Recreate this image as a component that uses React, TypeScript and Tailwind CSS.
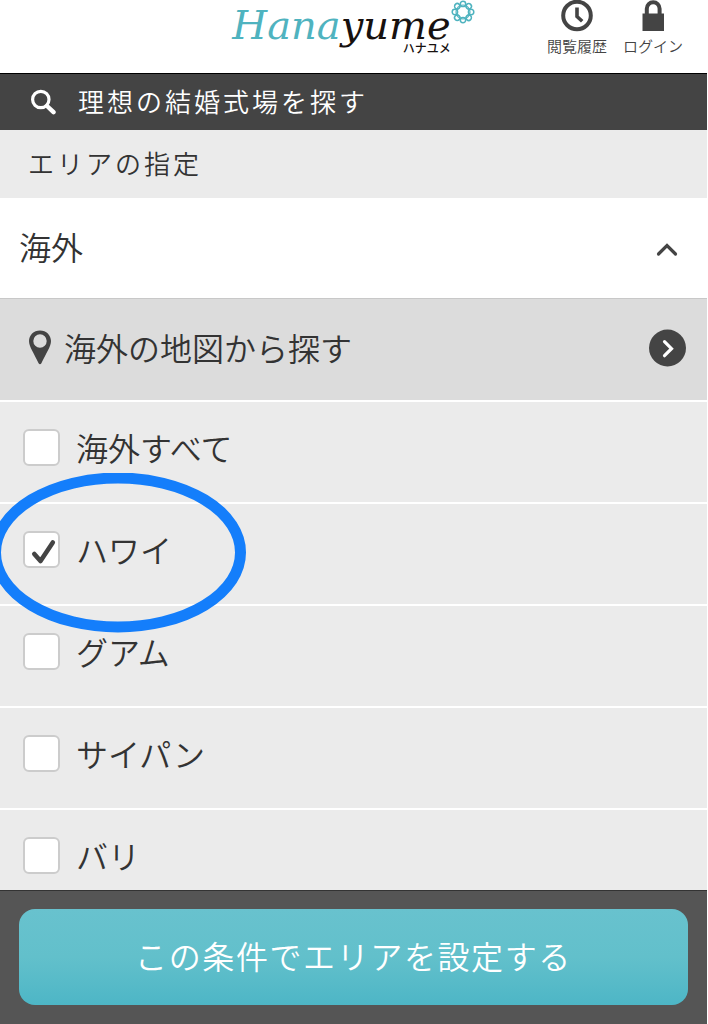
import { useState } from 'react';

interface Area {
  id: string;
  label: string;
}

const AREAS: Area[] = [
  { id: 'all', label: '海外すべて' },
  { id: 'hawaii', label: 'ハワイ' },
  { id: 'guam', label: 'グアム' },
  { id: 'saipan', label: 'サイパン' },
  { id: 'bali', label: 'バリ' },
];

const PETALS = [0, 45, 90, 135, 180, 225, 270, 315];

function Logo() {
  return (
    <a href="#top" className="relative block pr-6" aria-label="Hanayume ハナユメ">
      <span className="block font-['DejaVu_Serif',serif] text-[40px] leading-[50px] whitespace-nowrap text-[#17110f] italic">
        <span className="text-[#4fb3bf]">Hana</span>yume
      </span>
      <span className="absolute right-6 bottom-[-6px] text-xs leading-4 font-medium text-[#17110f]">
        ハナユメ
      </span>
      <svg
        viewBox="0 0 24 24"
        className="absolute top-0 right-0 size-6"
        fill="none"
        stroke="#4fb3bf"
        aria-hidden="true"
      >
        <circle cx="12" cy="12" r="7" strokeWidth="1.2" />
        {PETALS.map((angle) => (
          <circle
            key={angle}
            cx="12"
            cy="3.9"
            r="2.7"
            strokeWidth="1.5"
            transform={`rotate(${angle} 12 12)`}
          />
        ))}
      </svg>
    </a>
  );
}

function Header() {
  return (
    <header className="grid h-[74px] shrink-0 grid-cols-[1fr_auto_1fr] items-start border-b border-black bg-white">
      <div />
      <Logo />
      <nav className="flex justify-end gap-4 pr-6 text-[15px] leading-5 text-[#444]">
        <a href="#history" className="flex flex-col items-center gap-1">
          <svg viewBox="0 0 32 32" className="size-8" fill="none" stroke="#444" aria-hidden="true">
            <circle cx="16" cy="15.5" r="13.8" strokeWidth="4" />
            <path d="M16 7.500v9l5.200 4.800" strokeWidth="3.6" />
          </svg>
          閲覧履歴
        </a>
        <a href="#login" className="flex flex-col items-center gap-1">
          <svg viewBox="0 0 32 32" className="size-8" fill="#444" aria-hidden="true">
            <path d="M5.500 13.500h21.500v17.500H5.500z" />
            <path
              d="M9.800 15V8.700a6.400 6.400 0 0 1 12.800 0V15"
              fill="none"
              stroke="#444"
              strokeWidth="4"
            />
          </svg>
          ログイン
        </a>
      </nav>
    </header>
  );
}

interface AreaRowProps {
  area: Area;
  checked: boolean;
  onToggle: () => void;
}

function AreaRow({ area, checked, onToggle }: AreaRowProps) {
  return (
    <li className="relative border-b-2 border-white bg-[#ebebeb]">
      <label className="flex h-[100px] items-center gap-4 pb-2.5 pl-[23px]">
        <span className="grid size-[37px]">
          <input
            type="checkbox"
            checked={checked}
            onChange={onToggle}
            className="peer col-start-1 row-start-1 size-[37px] appearance-none rounded-md border-2 border-[#ccc] bg-white"
          />
          <svg
            viewBox="0 0 37 37"
            className="pointer-events-none invisible z-10 col-start-1 row-start-1 size-[37px] peer-checked:visible"
            fill="none"
            stroke="#444"
            strokeWidth="4.6"
            strokeLinecap="round"
            strokeLinejoin="round"
            aria-hidden="true"
          >
            <path d="M11.300 23l6.200 7L29.800 11.500" />
          </svg>
        </span>
        <span>{area.label}</span>
      </label>
      {area.id === 'hawaii' && (
        <svg
          viewBox="0 0 256 160"
          className="pointer-events-none absolute top-[-31px] left-[-10px] z-20 h-[160px] w-[256px]"
          fill="none"
          aria-hidden="true"
        >
          <ellipse cx="128" cy="79.500" rx="122.500" ry="74.500" stroke="#147efb" strokeWidth="11" />
        </svg>
      )}
    </li>
  );
}

export default function App() {
  const [open, setOpen] = useState(true);
  const [selected, setSelected] = useState<string[]>(['hawaii']);

  const toggle = (id: string) =>
    setSelected((ids) => (ids.includes(id) ? ids.filter((x) => x !== id) : [...ids, id]));

  return (
    <div
      lang="ja"
      className="flex h-screen flex-col overflow-hidden bg-white pr-px font-['Noto_Sans_CJK_JP',sans-serif] text-[32px] leading-10 font-[350] text-[#333]"
    >
      <Header />

      <h1 className="flex h-14 shrink-0 items-center gap-[22px] bg-[#444] pl-[30px] text-[26px] font-[350] tracking-[3px] text-white">
        <svg
          viewBox="0 0 26 26"
          className="size-[26px]"
          fill="none"
          stroke="#fff"
          strokeLinecap="round"
          aria-hidden="true"
        >
          <circle cx="10.800" cy="10.500" r="8.200" strokeWidth="3.200" />
          <path d="M17 17l6.500 6.200" strokeWidth="4.400" />
        </svg>
        <span className="pb-0.5">理想の結婚式場を探す</span>
      </h1>

      <h2 className="flex h-[68px] shrink-0 items-center bg-[#ebebeb] pb-0.5 pl-7 text-[26px] font-[350] tracking-[3px]">
        エリアの指定
      </h2>

      <main className="min-h-0 flex-1 overflow-y-auto bg-[#ebebeb] [scrollbar-width:none]">
        <button
          type="button"
          aria-expanded={open}
          onClick={() => setOpen(!open)}
          className="flex h-[101px] w-full items-center justify-between border-b border-[#c8c8c8] bg-white pr-7 pl-[19px]"
        >
          <span className="pb-1">海外</span>
          <svg
            viewBox="0 0 24 24"
            className="size-6"
            fill="none"
            stroke="#444"
            strokeWidth="3.200"
            strokeLinecap="round"
            aria-hidden="true"
          >
            <path d={open ? 'M3.500 18l8.500-8.500 8.500 8.500' : 'M3.500 9.500l8.500 8.500 8.500-8.500'} />
          </svg>
        </button>

        {open && (
          <>
            <a
              href="#map"
              className="flex h-[103px] items-center gap-3 border-b-2 border-white bg-[#dcdcdc] pr-5 pb-1 pl-7"
            >
              <svg viewBox="0 0 24 36" className="h-9 w-6" fill="#444" aria-hidden="true">
                <path
                  fillRule="evenodd"
                  d="M12 .5C5.600.5 1 5.200 1 11c0 5.500 5 12.500 9.600 22.200.7 1.400 2.100 1.400 2.800 0C18 23.500 23 16.500 23 11 23 5.200 18.400.5 12 .5zm0 3.800a6.700 6.700 0 1 1 0 13.400 6.700 6.700 0 0 1 0-13.400z"
                />
              </svg>
              <span className="flex-1 pb-0.5">海外の地図から探す</span>
              <svg viewBox="0 0 38 38" className="size-[38px]" fill="none" aria-hidden="true">
                <circle cx="18.500" cy="19" r="18.500" fill="#444" />
                <path
                  d="M15.500 12.700l7 7-7 7"
                  stroke="#fff"
                  strokeWidth="3.200"
                  strokeLinecap="round"
                />
              </svg>
            </a>

            <ul>
              {AREAS.map((area) => (
                <AreaRow
                  key={area.id}
                  area={area}
                  checked={selected.includes(area.id)}
                  onToggle={() => toggle(area.id)}
                />
              ))}
            </ul>
          </>
        )}
      </main>

      <footer className="shrink-0 border-t border-[#333] bg-[#555] px-[19px] pt-[18px] pb-[19px]">
        <button
          type="button"
          className="h-24 w-full rounded-2xl bg-linear-to-b from-[#68c2ce] via-[#62c0cb] to-[#4db6c6] pb-1 tracking-wider text-white"
        >
          この条件でエリアを設定する
        </button>
      </footer>
    </div>
  );
}
